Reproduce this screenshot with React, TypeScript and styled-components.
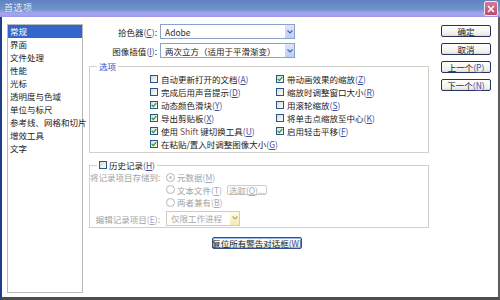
import React from "react";
import styled, { createGlobalStyle } from "styled-components";

const GlobalStyle = createGlobalStyle`
  html, body { margin: 0; padding: 0; background: #fff; }
  body {
    font-family: "Noto Sans CJK SC", "Liberation Sans", sans-serif;
    font-size: 8.5px;
    color: #111;
  }
`;

const sections = [
  "常规",
  "界面",
  "文件处理",
  "性能",
  "光标",
  "透明度与色域",
  "单位与标尺",
  "参考线、网格和切片",
  "增效工具",
  "文字",
];

const leftOptions = [
  { label: "自动更新打开的文档", k: "A", checked: false },
  { label: "完成后用声音提示", k: "D", checked: false },
  { label: "动态颜色滑块", k: "Y", checked: true },
  { label: "导出剪贴板", k: "X", checked: true },
  { label: "使用 Shift 键切换工具", k: "U", checked: true },
  { label: "在粘贴/置入时调整图像大小", k: "G", checked: true },
];

const rightOptions = [
  { label: "带动画效果的缩放", k: "Z", checked: true },
  { label: "缩放时调整窗口大小", k: "R", checked: false },
  { label: "用滚轮缩放", k: "S", checked: false },
  { label: "将单击点缩放至中心", k: "K", checked: false },
  { label: "启用轻击平移", k: "F", checked: true },
];

const Window = styled.div`
  width: 500px;
  height: 300px;
  display: flex;
  flex-direction: column;
  box-sizing: border-box;
`;

const TitleBar = styled.div`
  height: 17px;
  flex-shrink: 0;
  display: flex;
  align-items: center;
  justify-content: space-between;
  padding: 0 2px 0 4px;
  background: linear-gradient(
    to bottom,
    #5f82c2 0%,
    #7193cb 55%,
    #8ea4e2 70%,
    #aaa4f2 82%,
    #9c96e6 100%
  );
`;

const Title = styled.span`
  color: #f4f6ff;
  font-size: 9px;
  letter-spacing: 0.5px;
  text-shadow: 0 0 1px #4a5fa0;
  margin-top: -2px;
`;

const CloseButton = styled.div`
  width: 12px;
  height: 13px;
  border: 1px solid #f2e6f0;
  border-radius: 2px;
  background: linear-gradient(to bottom, #d87a92, #b84a6c);
  display: flex;
  align-items: center;
  justify-content: center;
`;

const Body = styled.div`
  flex: 1;
  display: flex;
  align-items: flex-start;
  padding: 7px 5px 4px 5px;
  border-left: 2px solid #1d3f88;
  border-right: 2px solid #5c5c5c;
  border-bottom: 3px solid #4e4e4e;
  background: #fff;
  min-height: 0;
`;

const Sidebar = styled.ul`
  list-style: none;
  margin: 0;
  padding: 0;
  width: 76px;
  height: 269px;
  box-sizing: border-box;
  border: 1px solid #b9b9b9;
  flex-shrink: 0;
  overflow: visible;
`;

const SidebarItem = styled.li<{ $active?: boolean }>`
  height: 13px;
  line-height: 12px;
  padding-left: 2px;
  white-space: nowrap;
  color: ${(p) => (p.$active ? "#fff" : "#1a1a1a")};
  background: ${(p) => (p.$active ? "#3366cc" : "transparent")};
`;

const Main = styled.div`
  width: 340px;
  margin-left: 6px;
  display: flex;
  flex-direction: column;
  flex-shrink: 0;
`;

const FieldRow = styled.div`
  display: flex;
  align-items: center;
  height: 15px;
  & + & {
    margin-top: 4px;
  }
`;

const FieldLabel = styled.span<{ $width?: number; $disabled?: boolean }>`
  width: ${(p) => p.$width ?? 71}px;
  text-align: right;
  padding-right: 3px;
  box-sizing: border-box;
  white-space: nowrap;
  color: ${(p) => (p.$disabled ? "#a3a3a3" : "#1a1a1a")};
`;

const SelectBox = styled.div<{ $width: number; $disabled?: boolean }>`
  width: ${(p) => p.$width}px;
  height: 15px;
  box-sizing: border-box;
  border: 1px solid ${(p) => (p.$disabled ? "#cfcdbf" : "#8aa2c4")};
  background: #fff;
  display: flex;
  align-items: center;
  color: ${(p) => (p.$disabled ? "#a8a8a8" : "#333")};
  white-space: nowrap;
  overflow: hidden;
`;

const SelectText = styled.span<{ $dark?: boolean }>`
  flex: 1;
  padding-left: 4px;
  overflow: hidden;
  color: ${(p) => (p.$dark ? "#1a1a1a" : "inherit")};
`;

const SelectArrow = styled.span<{ $disabled?: boolean }>`
  width: 9px;
  height: 13px;
  flex-shrink: 0;
  display: flex;
  align-items: center;
  justify-content: center;
  background: ${(p) =>
    p.$disabled
      ? "linear-gradient(to bottom, #fdfbe8, #f2eab8)"
      : "linear-gradient(to bottom, #dde6fe, #bccdf8)"};
`;

const Group = styled.div<{ $top: number }>`
  margin-top: ${(p) => p.$top}px;
  border: 1px solid #d2d0c8;
  display: flex;
  flex-direction: column;
`;

const Legend = styled.div<{ $plain?: boolean }>`
  align-self: flex-start;
  display: flex;
  align-items: center;
  gap: 2px;
  height: 12px;
  margin: -7px 0 0 7px;
  padding: 0 2px;
  background: #fff;
  color: ${(p) => (p.$plain ? "#1a1a1a" : "#1e56c8")};
  white-space: nowrap;
`;

const OptionsGrid = styled.div`
  display: grid;
  grid-template-columns: 126px auto;
  grid-template-rows: repeat(6, 13px);
  grid-auto-flow: column;
  padding: 0 0 2px 60px;
`;

const OptionRow = styled.label`
  display: flex;
  align-items: center;
  gap: 3px;
  white-space: nowrap;
  color: #1a1a1a;
`;

const Box = styled.span`
  width: 8px;
  height: 8px;
  box-sizing: border-box;
  border: 1px solid #2a5686;
  background: linear-gradient(135deg, #dcdcd6, #fbfbf8);
  display: flex;
  align-items: center;
  justify-content: center;
  flex-shrink: 0;
`;

const Key = styled.span<{ $disabled?: boolean }>`
  color: ${(p) => (p.$disabled ? "#a6a9c4" : "#3b4ea0")};
  u {
    text-decoration: underline;
  }
`;

const ShiftWord = styled.span`
  color: #8a4b3a;
`;

const HistoryGrid = styled.div`
  display: grid;
  grid-template-columns: 76px 61px auto;
  grid-template-rows: 12.5px 12.5px 12.5px 17px;
  align-items: center;
  padding: 0 0 1px 0;
  color: #a3a3a3;
`;

const HistoryLabel = styled.span<{ $row: number }>`
  grid-column: 1;
  grid-row: ${(p) => p.$row};
  align-self: ${(p) => (p.$row === 4 ? "end" : "center")};
  line-height: ${(p) => (p.$row === 4 ? "14px" : "normal")};
  text-align: right;
  padding-right: 6px;
  white-space: nowrap;
`;

const RadioRow = styled.span<{ $row: number }>`
  grid-column: 2;
  grid-row: ${(p) => p.$row};
  display: flex;
  align-items: center;
  gap: 2px;
  white-space: nowrap;
`;

const Radio = styled.span<{ $on?: boolean }>`
  width: 7px;
  height: 7px;
  border-radius: 50%;
  border: 1px solid #b5b5b0;
  background: #fff;
  display: flex;
  align-items: center;
  justify-content: center;
  flex-shrink: 0;
  &::after {
    content: "";
    width: 3px;
    height: 3px;
    border-radius: 50%;
    background: ${(p) => (p.$on ? "#c4c4c0" : "transparent")};
  }
`;

const SmallButton = styled.span`
  grid-column: 3;
  grid-row: 2;
  width: 40px;
  height: 10px;
  box-sizing: border-box;
  border: 1px solid #cfcdc0;
  border-radius: 2px;
  display: flex;
  align-items: center;
  justify-content: center;
  white-space: nowrap;
  color: #a8a8a8;
`;

const EditSelect = styled.div`
  grid-column: 2 / 4;
  grid-row: 4;
  align-self: end;
`;

const PushButton = styled.div<{ $focus?: boolean }>`
  height: 12px;
  box-sizing: border-box;
  border: 1px solid ${(p) => (p.$focus ? "#2f4f8e" : "#23345f")};
  border-radius: 2px;
  background: linear-gradient(to bottom, #ffffff, #f0efe9 80%, #dcdad0);
  box-shadow: ${(p) => (p.$focus ? "inset 0 0 0 1px #9bb8ea" : "none")};
  display: flex;
  align-items: center;
  justify-content: center;
  white-space: nowrap;
  color: #1a1a1a;
  font-size: 8.5px;
`;

const ResetButton = styled(PushButton)`
  align-self: center;
  width: 90px;
  margin-top: 9px;
  margin-left: -4px;
`;

const Actions = styled.div`
  width: 50px;
  margin-left: 12px;
  margin-top: 1px;
  display: flex;
  flex-direction: column;
  gap: 6px;
  flex-shrink: 0;
`;

const Check = ({ checked }: { checked?: boolean }) => (
  <Box>
    {checked && (
      <svg width="6" height="6" viewBox="0 0 6 6">
        <path d="M0.8 3 L2.4 4.6 L5.2 1.2" fill="none" stroke="#22a322" strokeWidth="1.3" />
      </svg>
    )}
  </Box>
);

const Mnemonic = ({ k, disabled }: { k: string; disabled?: boolean }) => (
  <Key $disabled={disabled}>
    (<u>{k}</u>)
  </Key>
);

const Chevron = ({ color }: { color: string }) => (
  <svg width="6" height="4" viewBox="0 0 6 4">
    <path d="M0.5 0.5 L3 3 L5.5 0.5" fill="none" stroke={color} strokeWidth="1.2" />
  </svg>
);

const renderLabel = (label: string) => {
  if (!label.includes("Shift")) return label;
  const [a, b] = label.split("Shift");
  return (
    <>
      {a}
      <ShiftWord>Shift</ShiftWord>
      {b}
    </>
  );
};

export default function App() {
  return (
    <>
      <GlobalStyle />
      <Window>
        <TitleBar>
          <Title>首选项</Title>
          <CloseButton>
            <svg width="8" height="8" viewBox="0 0 8 8">
              <path d="M1 1 L7 7 M7 1 L1 7" stroke="#fff" strokeWidth="1.6" />
            </svg>
          </CloseButton>
        </TitleBar>
        <Body>
          <Sidebar>
            {sections.map((s, i) => (
              <SidebarItem key={s} $active={i === 0}>
                {s}
              </SidebarItem>
            ))}
          </Sidebar>

          <Main>
            <FieldRow>
              <FieldLabel>
                拾色器<Mnemonic k="C" />:
              </FieldLabel>
              <SelectBox $width={135}>
                <SelectText>Adobe</SelectText>
                <SelectArrow>
                  <Chevron color="#4d61a8" />
                </SelectArrow>
              </SelectBox>
            </FieldRow>
            <FieldRow>
              <FieldLabel>
                图像插值<Mnemonic k="I" />:
              </FieldLabel>
              <SelectBox $width={135}>
                <SelectText $dark>两次立方（适用于平滑渐变）</SelectText>
                <SelectArrow>
                  <Chevron color="#4d61a8" />
                </SelectArrow>
              </SelectBox>
            </FieldRow>

            <Group $top={8}>
              <Legend>选项</Legend>
              <OptionsGrid>
                {[...leftOptions, ...rightOptions].map((o) => (
                  <OptionRow key={o.k}>
                    <Check checked={o.checked} />
                    <span>
                      {renderLabel(o.label)}
                      <Mnemonic k={o.k} />
                    </span>
                  </OptionRow>
                ))}
              </OptionsGrid>
            </Group>

            <Group $top={12}>
              <Legend $plain>
                <Check />
                <span>
                  历史记录<Mnemonic k="H" />
                </span>
              </Legend>
              <HistoryGrid>
                <HistoryLabel $row={1}>将记录项目存储到:</HistoryLabel>
                <RadioRow $row={1}>
                  <Radio $on />
                  <span>
                    元数据<Mnemonic k="M" disabled />
                  </span>
                </RadioRow>
                <RadioRow $row={2}>
                  <Radio />
                  <span>
                    文本文件<Mnemonic k="T" disabled />
                  </span>
                </RadioRow>
                <SmallButton>
                  选取<Mnemonic k="O" disabled />...
                </SmallButton>
                <RadioRow $row={3}>
                  <Radio />
                  <span>
                    两者兼有<Mnemonic k="B" disabled />
                  </span>
                </RadioRow>
                <HistoryLabel $row={4}>
                  编辑记录项目<Mnemonic k="E" disabled />:
                </HistoryLabel>
                <EditSelect>
                  <SelectBox $width={74} $disabled>
                    <SelectText>仅限工作进程</SelectText>
                    <SelectArrow $disabled>
                      <Chevron color="#b8a860" />
                    </SelectArrow>
                  </SelectBox>
                </EditSelect>
              </HistoryGrid>
            </Group>

            <ResetButton $focus>
              复位所有警告对话框<Mnemonic k="W" />
            </ResetButton>
          </Main>

          <Actions>
            <PushButton>确定</PushButton>
            <PushButton>取消</PushButton>
            <PushButton>
              上一个<Mnemonic k="P" />
            </PushButton>
            <PushButton>
              下一个<Mnemonic k="N" />
            </PushButton>
          </Actions>
        </Body>
      </Window>
    </>
  );
}
